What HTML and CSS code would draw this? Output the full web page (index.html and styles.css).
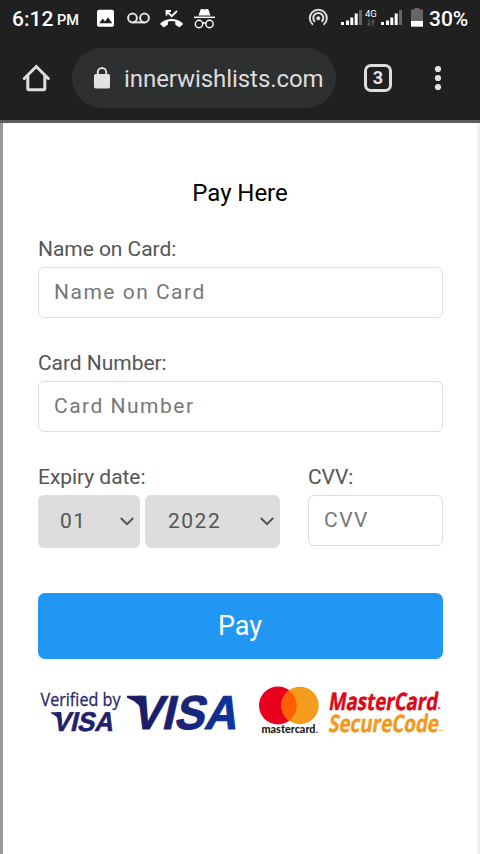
FILE: index.html
```
<!DOCTYPE html>
<html lang="en">
<head>
<meta charset="utf-8">
<title>Pay Here</title>
<link rel="stylesheet" href="styles.css">
</head>
<body>
<header class="chrome">
  <div class="status">
    <span class="time">6:12</span><span class="ampm">PM</span>
    <svg class="ic-photo" width="18" height="18" viewBox="0 0 18 18"><rect x="0" y=".8" width="17" height="17" rx="2" fill="#fff"/><path d="M2.200 14.300 5.700 9.500l2.300 3 3-4.200 4.200 6z" fill="#202020"/></svg>
    <svg class="ic-voice" width="24" height="12" viewBox="0 0 24 12" fill="none" stroke="#e4e4e4" stroke-width="2"><circle cx="5.500" cy="6" r="4.400"/><circle cx="17.500" cy="6" r="4.400"/><path d="M5.500 10.400h12"/></svg>
    <svg class="ic-missed" width="24" height="20" viewBox="0 0 24 20"><path d="M.5 14.200C7 8.700 16.300 8.700 22.600 14.200q.5.600 0 1.200l-2.700 2.700q-.6.500-1.200 0l-2.900-2q-.5-.4-.5-1v-2.500q-3.700-1-7.400 0v2.500q0 .6-.5 1l-2.900 2q-.6.500-1.200 0L.5 15.400q-.5-.6 0-1.200z" fill="#fff"/><path d="M6.500 6.500V2H11M6.500 2l5.200 5.200L17 2" fill="none" stroke="#fff" stroke-width="1.800"/></svg>
    <svg class="ic-incog" width="22" height="22" viewBox="0 0 22 22"><path d="M4.500 7.500 6.500 1.800q.4-1 1.400-.8l2.600.6 2.600-.6q1-.2 1.400.8l2 5.700z" fill="#fff"/><path d="M0 9.300h21" stroke="#fff" stroke-width="1.500"/><g fill="none" stroke="#fff" stroke-width="1.400"><circle cx="5" cy="16" r="3.700"/><circle cx="15.500" cy="16" r="3.700"/><path d="M8.500 15.500q2-1.400 3.500 0"/></g></svg>
    <svg class="ic-hot" width="20" height="19" viewBox="0 0 20 19" fill="none" stroke="#ddd" stroke-width="2"><path d="M5 16.800a8.500 8.500 0 1 1 10.600 0"/><path d="M7 13.700a5 5 0 1 1 6.600 0"/><circle cx="10.300" cy="10.300" r="2" fill="#ddd" stroke="none"/></svg>
    <svg class="ic-sig1" width="22" height="16" viewBox="0 0 22 16"><path d="M0 12h3v3H0zM5 10.500h3V15H5zM9.300 7.500h3V15h-3zM13.700 3.500h3V15h-3z" fill="#fff"/><path d="M18 0h3v15h-3z" fill="#666"/></svg>
    <span class="net"><span>4G</span><svg width="8" height="8" viewBox="0 0 8 8" fill="none" stroke="#555" stroke-width="1.300"><path d="M2 0v6M.5 4.500 2 6.500l1.500-2M6 7.500V1M4.500 3 6 1l1.500 2"/></svg></span>
    <svg class="ic-sig2" width="22" height="16" viewBox="0 0 22 16"><path d="M0 12h3v3H0zM5 10.500h3V15H5zM9.300 7.500h3V15h-3zM13.700 3.500h3V15h-3z" fill="#fff"/><path d="M18 0h3v15h-3z" fill="#666"/></svg>
    <svg class="ic-bat" width="12" height="19" viewBox="0 0 12 19"><path d="M3.500 0h5v1.500H12V13H0V1.500h3.500z" fill="#666"/><path d="M0 13h12v5.700H0z" fill="#fff"/></svg>
    <span class="pct">30%</span>
  </div>
  <div class="toolbar">
    <svg class="ic-home" width="28" height="28" viewBox="0 0 28 28" fill="none" stroke="#dedede" stroke-width="3"><path d="M2.300 14.500 14.300 2.500l12 12" stroke-linecap="round"/><path d="M5.800 12v12.500q0 1.200 1.200 1.200h14.600q1.200 0 1.200-1.200V12"/></svg>
    <div class="address">
      <svg width="16" height="22" viewBox="0 0 16 22"><rect y="7" width="16" height="14.500" rx="1.800" fill="#e2e2e2"/><path d="M3.800 8V5.200a4.200 4.200 0 0 1 8.400 0V8" fill="none" stroke="#e2e2e2" stroke-width="1.900"/></svg>
      <span class="url">innerwishlists.com</span>
    </div>
    <div class="tabs">3</div>
    <svg class="ic-menu" width="8" height="26" viewBox="0 0 8 26" fill="#e2e2e2"><circle cx="4" cy="4" r="3.100"/><circle cx="4" cy="13" r="3.100"/><circle cx="4" cy="22" r="3.100"/></svg>
  </div>
</header>
<main class="page">
  <h1>Pay Here</h1>
  <form>
    <div class="field">
      <label for="name">Name on Card:</label>
      <input id="name" type="text" placeholder="Name on Card">
    </div>
    <div class="field">
      <label for="number">Card Number:</label>
      <input id="number" type="text" placeholder="Card Number">
    </div>
    <div class="row">
      <div class="field">
        <label>Expiry date:</label>
        <div class="selects">
          <div class="select month"><span>01</span><svg width="14" height="9" viewBox="0 0 14 9" fill="none" stroke="#555" stroke-width="2"><path d="m.8 1 6.200 6.200L13.200 1"/></svg></div>
          <div class="select year"><span>2022</span><svg width="14" height="9" viewBox="0 0 14 9" fill="none" stroke="#555" stroke-width="2"><path d="m.8 1 6.200 6.200L13.200 1"/></svg></div>
        </div>
      </div>
      <div class="field cvv">
        <label for="cvv">CVV:</label>
        <input id="cvv" type="text" placeholder="CVV">
      </div>
    </div>
    <button type="button">Pay</button>
  </form>
  <svg class="logos" width="405" height="54" viewBox="38 684 405 54">
    <defs>
      <linearGradient id="navy" x1="0" x2="1"><stop stop-color="#1d1c60"/><stop offset=".5" stop-color="#192375"/><stop offset="1" stop-color="#0938a6"/></linearGradient>
    </defs>
    <text class="verified" x="40.500" y="705.500" textLength="80" lengthAdjust="spacingAndGlyphs">Verified by</text>
    <path d="M51 712.200h9l2 9-2 1q-2-6-9-9z" fill="#22206b"/>
    <text class="visa-s" transform="translate(52.500 731) skewX(-13)" textLength="60" lengthAdjust="spacingAndGlyphs">VISA</text>
    <path d="M127 695.700h16l4 17-3 3q-3-13-17-18z" fill="#1d1c60"/>
    <text class="visa-l" transform="translate(131 729) skewX(-13)" textLength="105" lengthAdjust="spacingAndGlyphs">VISA</text>
    <circle cx="278" cy="705.500" r="19" fill="#e8001c"/>
    <circle cx="300" cy="705.500" r="18.700" fill="#f39c1d"/>
    <path d="M289 690.200a19 19 0 0 1 0 30.600 19 19 0 0 1 0-30.600z" fill="#ff5f00"/>
    <text class="mc" x="261.500" y="733" textLength="54" lengthAdjust="spacingAndGlyphs">mastercard</text>
    <circle cx="317" cy="732.300" r=".7" fill="#222"/>
    <text class="sc red" transform="translate(328 709.500) skewX(-9)" textLength="109" lengthAdjust="spacingAndGlyphs">MasterCard</text>
    <circle cx="439.200" cy="708" r="1.300" fill="#e66"/>
    <text class="sc gold" transform="translate(328 732) skewX(-9)" textLength="110" lengthAdjust="spacingAndGlyphs">SecureCode</text>
    <path d="M439 730.500h4" stroke="#f4b766" stroke-width="1"/>
  </svg>
</main>
</body>
</html>
```
FILE: styles.css
```
* { box-sizing: border-box; }
body { margin: 0; width: 480px; height: 854px; overflow: hidden; background: #fff; font-family: Roboto, sans-serif; display: flex; flex-direction: column; }
svg { display: block; flex: none; }
.chrome { height: 123px; flex: none; background: #202020; border-bottom: 3px solid #5d5d5d; }
.status { display: flex; align-items: flex-start; height: 48px; padding-left: 12px; color: #fff; white-space: nowrap; }
.time { width: 45px; margin-top: 7px; font-size: 21px; line-height: 24px; font-weight: 500; }
.ampm { width: 40px; margin-top: 12px; font-size: 14.500px; line-height: 18px; font-weight: 500; }
.ic-photo { margin-top: 9px; }
.ic-voice { margin: 12px 0 0 12px; }
.ic-missed { margin: 9px 0 0 9px; }
.ic-incog { margin: 8px 0 0 10px; }
.ic-hot { margin: 8px 0 0 92px; }
.ic-sig1 { margin: 10px 0 0 13px; }
.net { width: 15px; margin: 9px 0 0 2px; font-size: 9.500px; line-height: 10px; }
.net svg { margin-left: 2px; }
.ic-sig2 { margin: 10px 0 0 1px; }
.ic-bat { margin: 8px 0 0 8px; }
.pct { margin: 7px 0 0 6px; font-size: 21px; line-height: 24px; font-weight: 500; }
.toolbar { display: flex; align-items: center; height: 60px; padding-left: 22px; }
.address { display: flex; align-items: center; width: 264px; height: 60px; margin-left: 22px; padding-left: 22px; border-radius: 30px; background: #2d2f30; }
.url { margin: 2px 0 0 14px; font-size: 24px; color: #ddd; letter-spacing: -.07px; }
.tabs { width: 28px; height: 28px; margin-left: 28px; border: 3px solid #dedede; border-radius: 7px; color: #e2e2e2; font-size: 18px; font-weight: 700; line-height: 22px; text-align: center; }
.ic-menu { margin-left: 42px; }
.page { flex: 1; padding: 55px 35px 0 35px; border-left: 3px solid #999; border-right: 3px solid #f0f0f0; }
h1 { margin: 0; font-size: 24px; line-height: 30px; font-weight: 400; text-align: center; color: #000; letter-spacing: -.05px; }
form { width: 405px; margin-top: 28px; }
.field { height: 114px; }
label { display: block; height: 31px; line-height: 26px; font-size: 21px; color: #555; white-space: nowrap; letter-spacing: -.05px; }
input { display: block; width: 100%; height: 51px; padding: 0 15px 2px; border: 1px solid #ddd; border-radius: 6px; background: #fff; font: 21px/25px Roboto, sans-serif; letter-spacing: 1.500px; outline: none; }
input::placeholder { color: #777; opacity: 1; }
.row { display: grid; grid-template-columns: 242px 135px; column-gap: 28px; }
.row .field { height: 129px; }
.selects { display: flex; gap: 5px; }
.select { display: flex; align-items: center; justify-content: space-between; height: 53px; border-radius: 6px; background: #ddd; padding: 0 6px 0 22px; font-size: 21px; letter-spacing: 1.500px; color: #555; }
.select span { margin-bottom: 2px; }
.month { width: 102px; }
.year { width: 135px; padding-left: 23px; }
button { display: block; width: 100%; height: 66px; border: 0; border-radius: 7px; background: #2196f3; color: #fff; font: 27px Roboto, sans-serif; padding: 0 7px 0 6px; }
.logos { margin-top: 25px; overflow: visible; }
.verified { font: 19px "Open Sans", sans-serif; fill: #29266f; stroke: #29266f; stroke-width: .3px; }
.visa-s, .visa-l { font-family: "Liberation Sans", sans-serif; font-weight: 700; }
.visa-s { font-size: 27px; fill: #22206b; stroke: #22206b; stroke-width: .6px; }
.visa-l { font-size: 47.500px; fill: url(#navy); stroke: url(#navy); stroke-width: 1px; }
.mc { font: 900 11px Lato, sans-serif; fill: #222; }
.sc { font: 700 24px "Open Sans", sans-serif; stroke-width: .5px; }
.red { fill: #de0715; stroke: #de0715; }
.gold { fill: #f19a1c; stroke: #f19a1c; }
```
